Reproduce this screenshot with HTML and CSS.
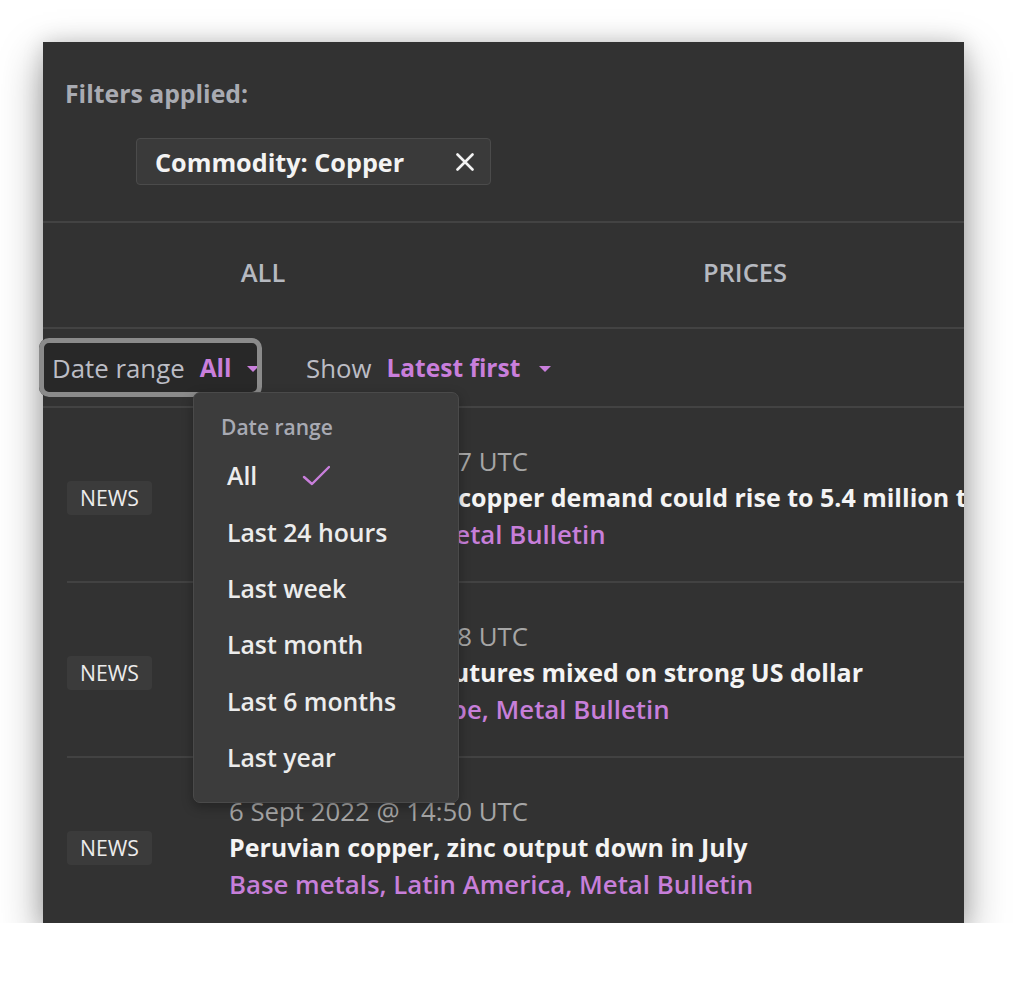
FILE: index.html
```html
<!DOCTYPE html>
<html lang="en">
<head>
<meta charset="utf-8">
<title>Filters</title>
<link rel="stylesheet" href="styles.css">
</head>
<body>
<div class="panel">
  <section class="filters">
    <div class="filters-label">Filters applied:</div>
    <div class="chip">
      <span class="chip-text">Commodity: Copper</span>
      <svg class="chip-x" width="18" height="18" viewBox="0 0 18 18"><path d="M1.5 1.5 L16.5 16.5 M16.5 1.5 L1.5 16.5" stroke="#f3f3f3" stroke-width="2.6" stroke-linecap="round" fill="none"/></svg>
    </div>
  </section>

  <nav class="tabs">
    <div class="tab">ALL</div>
    <div class="tab">PRICES</div>
    <div class="tab">ANALYSIS</div>
  </nav>

  <div class="controls">
    <div class="date-control">
      <span class="ctl-label">Date range</span>
      <span class="ctl-value">All</span>
      <span class="caret caret-date"></span>
    </div>
    <div class="show-control">
      <span class="ctl-label">Show</span>
      <span class="ctl-value">Latest first</span>
      <span class="caret"></span>
    </div>
  </div>

  <div class="list">
    <article class="row">
      <span class="badge">NEWS</span>
      <div class="text">
        <div class="date">7 Sept 2022 @ 09:17 UTC</div>
        <div class="title">Energy transition: copper demand could rise to 5.4 million tonnes by 2030</div>
        <div class="tags">Copper, Energy, Metal Bulletin</div>
      </div>
    </article>
    <article class="row">
      <span class="badge">NEWS</span>
      <div class="text">
        <div class="date">6 Sept 2022 @ 16:38 UTC</div>
        <div class="title">Shanghai copper futures mixed on strong US dollar</div>
        <div class="tags">Base metals, Europe, Metal Bulletin</div>
      </div>
    </article>
    <article class="row">
      <span class="badge">NEWS</span>
      <div class="text">
        <div class="date">6 Sept 2022 @ 14:50 UTC</div>
        <div class="title">Peruvian copper, zinc output down in July</div>
        <div class="tags">Base metals, Latin America, Metal Bulletin</div>
      </div>
    </article>
  </div>

  <div class="dropdown">
    <div class="dd-head">Date range</div>
    <ul class="dd-list">
      <li class="dd-item">All
        <svg class="check" width="28" height="22" viewBox="0 0 28 22"><polyline points="2,13 10,20 27,3" stroke="#c97fdc" stroke-width="2.4" fill="none" stroke-linecap="round" stroke-linejoin="round"/></svg>
      </li>
      <li class="dd-item">Last 24 hours</li>
      <li class="dd-item">Last week</li>
      <li class="dd-item">Last month</li>
      <li class="dd-item">Last 6 months</li>
      <li class="dd-item">Last year</li>
    </ul>
  </div>
</div>
</body>
</html>
```

FILE: styles.css
```css
body {
  margin: 0;
  background: #ffffff;
  font-family: "Open Sans", "Noto Sans", sans-serif;
}

.panel {
  position: relative;
  margin: 42px 0 0 43px;
  width: 921px;
  height: 881px;
  background: #323232;
  box-shadow: 0 16px 40px rgba(0, 0, 0, 0.38), 0 0 20px rgba(0, 0, 0, 0.14);
  display: flex;
  flex-direction: column;
}

/* Filters */
.filters {
  height: 181px;
  box-sizing: border-box;
  padding: 36px 0 0 22px;
  border-bottom: 2px solid #434343;
  flex: none;
}

.filters-label {
  font-weight: 700;
  font-size: 24.8px;
  line-height: 30px;
  color: #a9abb2;
}

.chip {
  margin: 30px 0 0 71px;
  width: 355px;
  height: 47px;
  box-sizing: border-box;
  border: 1px solid #4b4b4b;
  background: #3a3a3a;
  border-radius: 4px;
  display: flex;
  align-items: center;
  padding-left: 18px;
}

.chip-text {
  font-weight: 700;
  font-size: 25.2px;
  color: #f3f3f3;
}

.chip-x {
  margin-left: auto;
  margin-right: 16px;
}

/* Tabs */
.tabs {
  display: flex;
  height: 106px;
  box-sizing: border-box;
  padding-bottom: 6px;
  border-bottom: 2px solid #434343;
  overflow: hidden;
  flex: none;
}

.tab {
  flex: 0 0 482px;
  display: flex;
  align-items: center;
  justify-content: center;
  font-weight: 600;
  font-size: 25.5px;
  color: #b6b9c0;
}

.tab:first-child {
  margin-left: -21px;
}

/* Controls */
.controls {
  height: 79px;
  box-sizing: border-box;
  border-bottom: 2px solid #434343;
  display: flex;
  align-items: center;
  flex: none;
}

.date-control {
  position: relative;
  margin-left: -4px;
  width: 223px;
  height: 59px;
  box-sizing: border-box;
  padding-left: 13px;
  background: #282828;
  border-radius: 10px;
  display: flex;
  align-items: center;
}

.date-control::after {
  content: "";
  position: absolute;
  inset: 0;
  border: 5px solid #8b8b8b;
  border-radius: 10px;
}

.show-control {
  margin-left: 44px;
  display: flex;
  align-items: center;
}

.ctl-label {
  font-size: 25.8px;
  color: #bcbdc5;
}

.ctl-value {
  font-size: 24.5px;
  font-weight: 700;
  color: #c97fdc;
  margin-left: 15px;
}

.caret {
  width: 0;
  height: 0;
  border-left: 6px solid transparent;
  border-right: 6px solid transparent;
  border-top: 6px solid #c97fdc;
  margin-left: 19px;
  margin-top: 3px;
}

.caret-date {
  margin-left: 16px;
}

/* List */
.list {
  flex: 1;
  overflow: hidden;
}

.row {
  margin-left: 24px;
  height: 175px;
  box-sizing: border-box;
  padding-top: 6px;
  border-bottom: 2px solid #424242;
  display: flex;
  align-items: center;
}

.badge {
  flex: none;
  width: 85px;
  height: 34px;
  background: #3b3b3b;
  border-radius: 4px;
  display: flex;
  align-items: center;
  justify-content: center;
  font-size: 21.2px;
  color: #ececec;
  margin-right: 77px;
}

.text {
  white-space: nowrap;
  line-height: 36.5px;
}

.date {
  font-size: 25.8px;
  color: #a6a6a6;
}

.title {
  font-size: 25px;
  font-weight: 700;
  color: #f4f4f4;
}

.tags {
  font-size: 25.8px;
  font-weight: 600;
  color: #c77fda;
}

/* Dropdown */
.dropdown {
  position: absolute;
  left: 150px;
  top: 350px;
  width: 266px;
  height: 411px;
  box-sizing: border-box;
  background: #3c3c3c;
  border: 1px solid #4a4a4a;
  border-radius: 7px;
  padding-top: 21px;
  box-shadow: 0 4px 12px rgba(0, 0, 0, 0.3);
}

.dd-head {
  padding-left: 27px;
  font-weight: 600;
  font-size: 21px;
  line-height: 26px;
  color: #a8aab3;
}

.dd-list {
  list-style: none;
  margin: 7px 0 0;
  padding: 0;
}

.dd-item {
  height: 56.4px;
  padding-left: 33px;
  display: flex;
  align-items: center;
  font-size: 24.8px;
  font-weight: 600;
  color: #ececec;
}

.check {
  margin-left: 45px;
}
```
